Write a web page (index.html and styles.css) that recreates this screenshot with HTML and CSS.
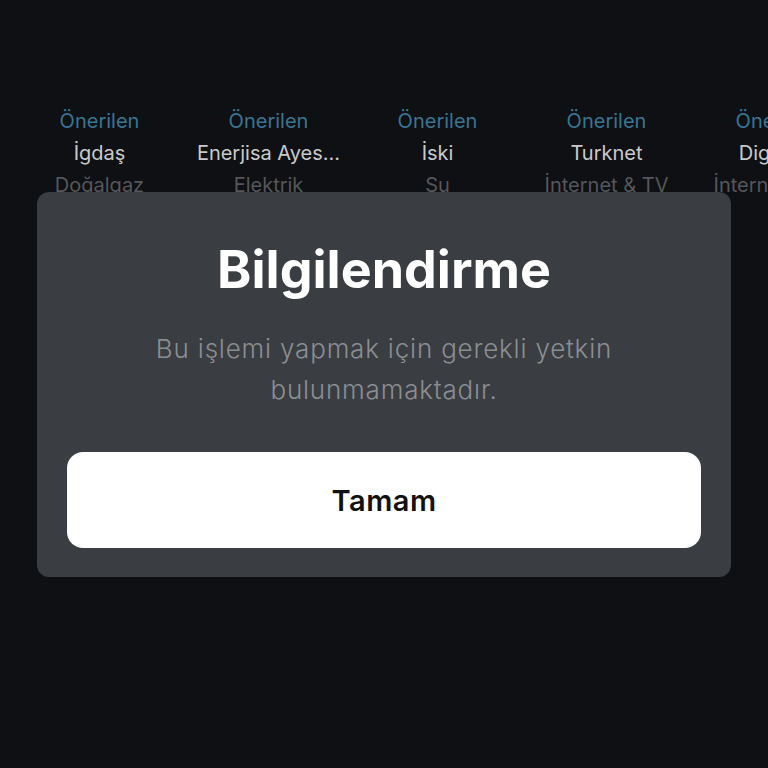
FILE: index.html
```html
<!DOCTYPE html>
<html lang="tr">
<head>
    <meta charset="UTF-8">
    <meta name="viewport" content="width=device-width, initial-scale=1.0">
    <title>Bilgilendirme</title>
    <link rel="stylesheet" href="styles.css">
</head>
<body>
    <div class="screen">
        <div class="suggest-row">
            <div class="suggest-item">
                <span class="suggest-tag">Önerilen</span>
                <span class="suggest-name">İgdaş</span>
                <span class="suggest-cat">Doğalgaz</span>
            </div>
            <div class="suggest-item">
                <span class="suggest-tag">Önerilen</span>
                <span class="suggest-name">Enerjisa Ayes...</span>
                <span class="suggest-cat">Elektrik</span>
            </div>
            <div class="suggest-item">
                <span class="suggest-tag">Önerilen</span>
                <span class="suggest-name">İski</span>
                <span class="suggest-cat">Su</span>
            </div>
            <div class="suggest-item">
                <span class="suggest-tag">Önerilen</span>
                <span class="suggest-name">Turknet</span>
                <span class="suggest-cat">İnternet &amp; TV</span>
            </div>
            <div class="suggest-item">
                <span class="suggest-tag">Önerilen</span>
                <span class="suggest-name">Digiturk</span>
                <span class="suggest-cat">İnternet &amp; TV</span>
            </div>
        </div>

        <div class="dialog">
            <h1 class="dialog-title">Bilgilendirme</h1>
            <p class="dialog-text">Bu işlemi yapmak için gerekli yetkin bulunmamaktadır.</p>
            <button class="dialog-btn" type="button">Tamam</button>
        </div>
    </div>
</body>
</html>
```

FILE: styles.css
```css
* {
    margin: 0;
    padding: 0;
    box-sizing: border-box;
}

body {
    font-family: Inter, "Noto Sans", sans-serif;
    background: #0e1014;
    width: 768px;
    height: 768px;
    overflow: hidden;
}

.screen {
    position: relative;
    width: 768px;
    height: 768px;
}

.suggest-row {
    display: flex;
    padding: 105px 0 0 15px;
    overflow: hidden;
}

.suggest-item {
    flex: 0 0 169px;
    display: flex;
    flex-direction: column;
    align-items: center;
    font-size: 20px;
    line-height: 32px;
    white-space: nowrap;
}

.suggest-tag {
    color: #3a7591;
}

.suggest-name {
    color: #cacaca;
}

.suggest-cat {
    color: #55575a;
}

/* overlay dialog */
.dialog {
    position: absolute;
    left: 37px;
    top: 192px;
    width: 694px;
    height: 385px;
    background: #3a3d41;
    border-radius: 12px;
    padding: 47px 30px 29px;
    display: flex;
    flex-direction: column;
    align-items: center;
}

.dialog-title {
    color: #ffffff;
    font-size: 52px;
    font-weight: 700;
    line-height: 62px;
}

.dialog-text {
    margin-top: 27px;
    width: 520px;
    text-align: center;
    color: #8b8e91;
    font-size: 26px;
    font-weight: 300;
    line-height: 41px;
    letter-spacing: 0.8px;
}

.dialog-btn {
    margin-top: auto;
    width: 100%;
    height: 96px;
    border: none;
    border-radius: 16px;
    background: #ffffff;
    color: #111111;
    font-family: inherit;
    font-size: 29px;
    font-weight: 600;
    letter-spacing: 0.5px;
}
```
